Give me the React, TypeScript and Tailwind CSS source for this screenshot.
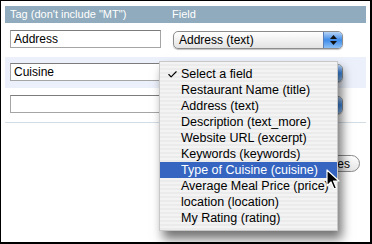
import { Check } from 'lucide-react'

const FONT = { fontFamily: '"Liberation Sans", Arial, sans-serif' }

const fields = [
  'Select a field',
  'Restaurant Name (title)',
  'Address (text)',
  'Description (text_more)',
  'Website URL (excerpt)',
  'Keywords (keywords)',
  'Type of Cuisine (cuisine)',
  'Average Meal Price (price)',
  'location (location)',
  'My Rating (rating)',
]

function TextBox({ value }: { value: string }) {
  return (
    <div className="w-[151px] h-[18px] border border-[#a5a5a5] border-t-[#7c7c7c] bg-white px-[3px] flex items-center text-[12px] text-black leading-none whitespace-nowrap">
      {value}
    </div>
  )
}

function AquaSelect({ label }: { label: string }) {
  return (
    <div className="w-[170px] h-[18px] rounded-[5px] border border-[#8c8c8c] bg-gradient-to-b from-white via-[#f1f1f1] to-[#e2e2e2] flex items-center overflow-hidden shadow-[0_1px_1px_rgba(0,0,0,0.25)]">
      <span className="flex-1 pl-[5px] text-[12px] text-black leading-none whitespace-nowrap">{label}</span>
      <div className="w-[19px] h-full bg-gradient-to-b from-[#b6d3f5] via-[#3d8be8] to-[#8cc0f6] border-l border-[#5a7fb8] flex flex-col items-center justify-center gap-[2px]">
        <svg width="7" height="4" viewBox="0 0 7 4"><path d="M0 4 L3.5 0 L7 4 Z" fill="#111" /></svg>
        <svg width="7" height="4" viewBox="0 0 7 4"><path d="M0 0 L3.5 4 L7 0 Z" fill="#111" /></svg>
      </div>
    </div>
  )
}

export default function App() {
  return (
    <div className="relative w-[372px] h-[244px] bg-white border border-black border-r-2 border-b-2 overflow-hidden" style={FONT}>
      <div className="pt-[5px] px-[4px]">
        <div className="h-[17px] bg-[#8fabbd] flex items-center text-white text-[11px] leading-none whitespace-nowrap">
          <span className="w-[167px] pl-[5px]">Tag (don't include "MT")</span>
          <span>Field</span>
        </div>

        <div className="h-[34px] flex items-start pt-[7px] pl-[5px] gap-[12px]">
          <TextBox value="Address" />
          <div className="pt-[1px]"><AquaSelect label="Address (text)" /></div>
        </div>

        <div className="h-[31px] bg-[#ebf0fa] flex items-start pt-[6px] pl-[5px] gap-[12px]">
          <TextBox value="Cuisine" />
          <div className="pt-[1px]"><AquaSelect label="" /></div>
        </div>

        <div className="h-[34px] flex items-start pt-[7px] pl-[5px] gap-[12px]">
          <TextBox value="" />
          <div className="pt-[1px]"><AquaSelect label="" /></div>
        </div>

        <div className="h-px bg-[#d3dde6]" />

        <div className="flex justify-end pr-[6px] pt-[32px]">
          <div className="h-[17px] pl-[10px] pr-[9px] rounded-full border border-[#8a8a8a] bg-gradient-to-b from-white to-[#e6e6e6] flex items-center text-[12px] text-black leading-none whitespace-nowrap">
            Save Changes
          </div>
        </div>
      </div>

      <div className="absolute left-[158px] top-[60px] w-[179px] pt-[4px] pb-[4px] bg-[repeating-linear-gradient(to_bottom,#f3f3f3_0px,#f3f3f3_2px,#ebebeb_2px,#ebebeb_4px)] border border-[#c8c8c8] shadow-[4px_8px_10px_rgba(0,0,0,0.55)]">
        {fields.map((f) => {
          const sel = f.startsWith('Type')
          return (
            <div
              key={f}
              className={`h-[16px] flex items-center text-[12.5px] leading-none whitespace-nowrap ${sel ? 'bg-[#3565c0] text-white' : 'text-black'}`}
            >
              <span className="w-[21px] flex justify-center pl-[3px]">
                {f === 'Select a field' ? <Check size={11} strokeWidth={2.5} /> : null}
              </span>
              <span>{f}</span>
            </div>
          )
        })}
      </div>

      <svg className="absolute left-[325px] top-[168px]" width="14" height="22" viewBox="0 0 14 22">
        <path d="M1 1 L1 17 L5 13 L8 20 L10.5 19 L7.5 12 L13 12 Z" fill="#000" stroke="#fff" strokeWidth="1.2" strokeLinejoin="round" />
      </svg>
    </div>
  )
}
